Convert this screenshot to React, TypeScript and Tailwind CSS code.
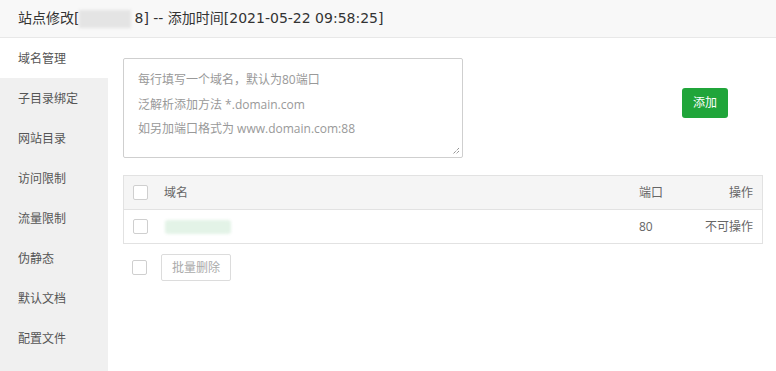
import { useState } from 'react'

const tabs = ['域名管理', '子目录绑定', '网站目录', '访问限制', '流量限制', '伪静态', '默认文档', '配置文件']

function Check() {
  return <span className="block w-[15px] h-[15px] border border-[#cfcfcf] rounded-[2px] bg-white" />
}

export default function App() {
  const [active] = useState(0)

  return (
    <div className="w-[776px] h-[371px] bg-white overflow-hidden text-[#333]" style={{ fontFamily: '"Open Sans", "Noto Sans CJK SC", sans-serif' }}>
      <div className="h-[38px] bg-[#f8f8f8] border-b border-[#e8e8e8] flex items-center pl-[18px] text-[14px] text-[#333]" style={{ fontFamily: '"DejaVu Sans", "Noto Sans CJK SC", sans-serif' }}>
        <span>站点修改[</span>
        <span className="w-[52px] h-[18px] bg-[#e4e4e4] blur-[1.5px]" />
        <span className="ml-[3px]">8] -- 添加时间[2021-05-22 09:58:25]</span>
      </div>
      <div className="flex h-[333px]">
        <div className="w-[108px] bg-[#f0f0f0] flex flex-col">
          {tabs.map((t, i) => (
            <div key={t} className={`h-10 shrink-0 flex items-center pl-[18px] pt-[1px] text-[12px] text-[#555] ${i === active ? 'bg-white' : ''}`}>{t}</div>
          ))}
        </div>
        <div className="flex-1 pl-[15px] pt-[20px]">
          <div className="flex">
            <div className="relative w-[340px] h-[100px] border border-[#cfcfcf] rounded-[2px] px-[14px] pt-[9px] text-[12px] text-[#999] leading-[24.5px]">
              <div>每行填写一个域名，默认为80端口</div>
              <div>泛解析添加方法 *.domain.com</div>
              <div>如另加端口格式为 www.domain.com:88</div>
              <svg className="absolute right-[2px] bottom-[2px]" width="8" height="8" viewBox="0 0 8 8">
                <path d="M7 1 L1 7 M7 4 L4 7" stroke="#666" strokeWidth="1" strokeDasharray="1 1" />
              </svg>
            </div>
            <button className="ml-[219px] mt-[30px] w-[46px] h-[30px] bg-[#20a53a] text-white text-[12px] rounded-[3px]">添加</button>
          </div>
          <div className="mt-[17px] w-[640px] border border-[#e2e2e2] text-[12px] text-[#666]">
            <div className="h-[34px] bg-[#f5f5f5] border-b border-[#e2e2e2] flex items-center pl-[9px] pr-[9px]">
              <Check />
              <span className="ml-[16px] flex-1">域名</span>
              <span className="w-[60px]">端口</span>
              <span className="w-[54px] text-right">操作</span>
            </div>
            <div className="h-[33px] flex items-center pl-[9px] pr-[9px]">
              <Check />
              <span className="ml-[17px] flex-1 flex">
                <span className="w-[66px] h-[14px] bg-[#e3f3e7] blur-[1.5px] rounded-[3px]" />
              </span>
              <span className="w-[60px]">80</span>
              <span className="w-[54px] text-right">不可操作</span>
            </div>
          </div>
          <div className="mt-[10px] flex items-center pl-[9px]">
            <Check />
            <button className="ml-[14px] w-[70px] h-[27px] border border-[#dcdcdc] rounded-[2px] text-[12px] text-[#aaa] bg-white">批量删除</button>
          </div>
        </div>
      </div>
    </div>
  )
}
